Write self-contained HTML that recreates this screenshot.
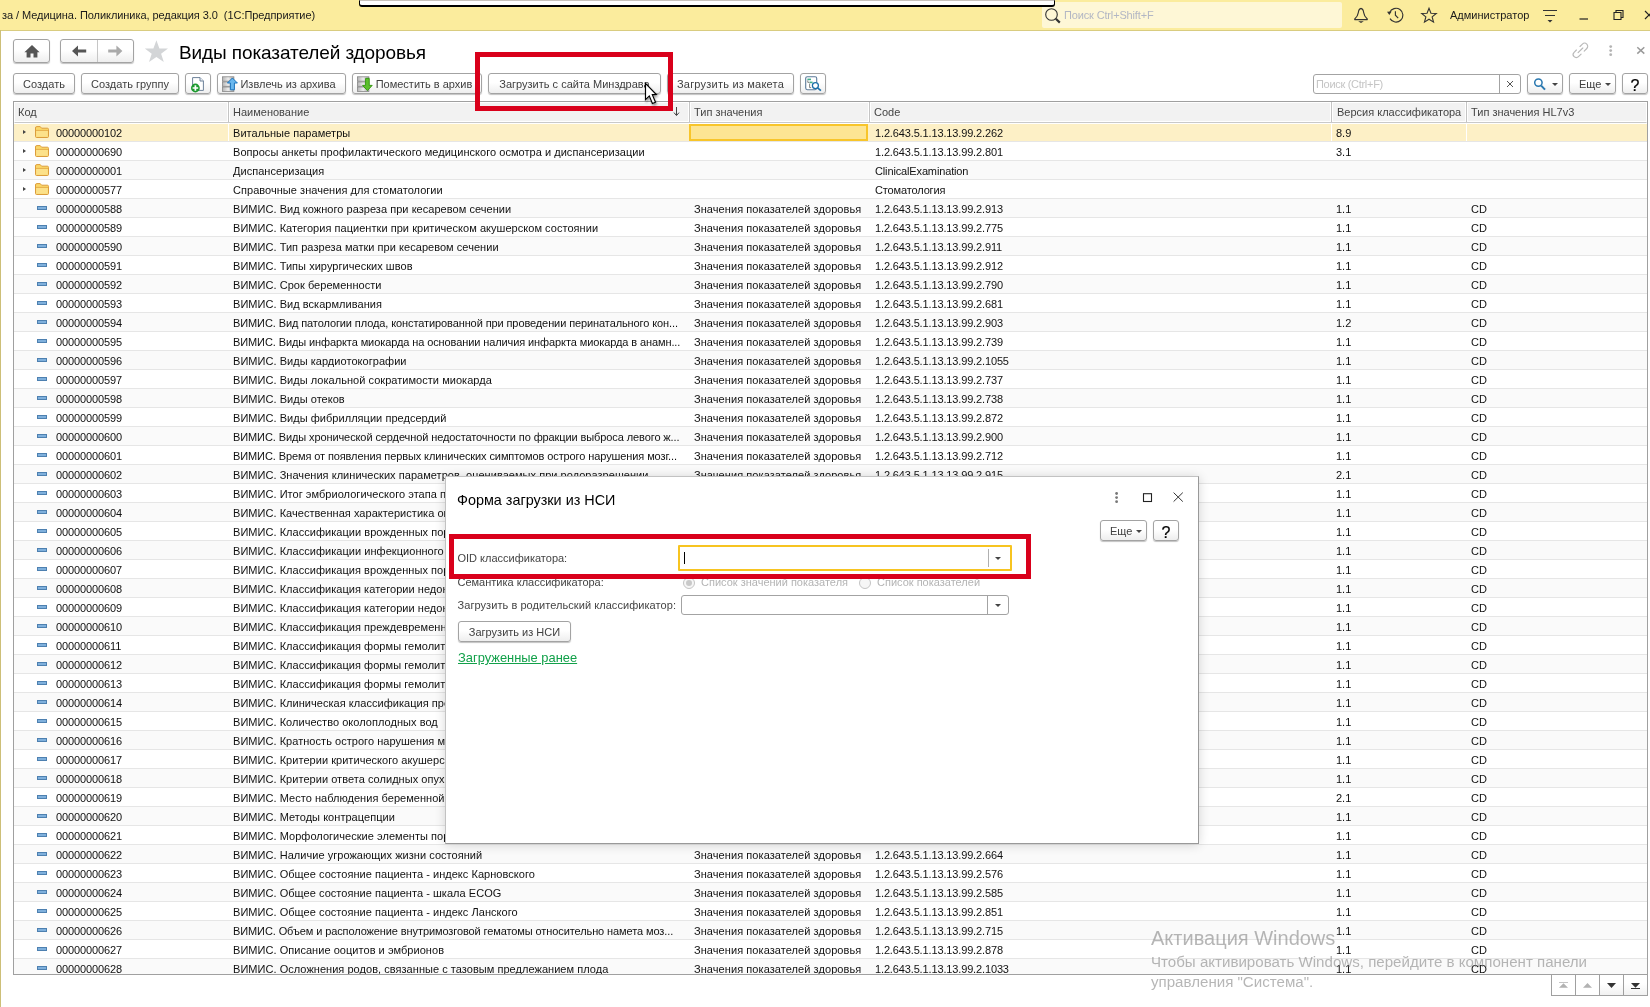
<!DOCTYPE html>
<html lang="ru"><head><meta charset="utf-8"><title>Виды показателей здоровья</title>
<style>
*{box-sizing:border-box;margin:0;padding:0}
html,body{width:1650px;height:1007px;overflow:hidden;background:#fff}
body{will-change:transform;position:relative;font-family:"Liberation Sans",Arial,sans-serif;font-size:11px;color:#333;line-height:1}
i{display:block;position:absolute;font-style:normal}
svg{position:absolute;overflow:visible}
/* title bar */
#tb{position:absolute;left:0;top:0;width:1650px;height:31px;background:#fbec9d;border-bottom:1px solid #d9cc80}
#lstrip{position:absolute;left:0;top:30px;width:1px;height:977px;background:#cdbf78}
#tbtxt{position:absolute;left:2px;top:10px;letter-spacing:-.06px;font-size:11px;color:#1a1a1a;white-space:pre}
#wbar{z-index:3;position:absolute;left:359px;top:0;width:696px;height:7px;background:#fff;border:1px solid #000;border-top:1px solid #c8c2bc;border-bottom-width:2px;border-radius:0 0 3px 3px}
#srch{position:absolute;left:1042px;top:2px;width:300px;height:26px;background:#fef7d6;border-radius:2px}
#srch span{position:absolute;left:22px;top:8px;font-size:11px;color:#b3b7c4;letter-spacing:-.15px}
#adm{position:absolute;left:1450px;top:10px;font-size:11px;color:#1a1a1a}
/* buttons */
.btn{position:absolute;height:21px;border:1px solid #a3a3a3;border-radius:3px;background:linear-gradient(#fff 45%,#eee);box-shadow:0 1px 1px rgba(0,0,0,.24);font-size:11px;color:#404040;text-align:center;line-height:19px;padding-top:1px;white-space:nowrap}
.nav{height:24px}
#title{position:absolute;left:179px;top:43px;font-size:19px;letter-spacing:-.1px;color:#000;white-space:nowrap}
.inp{position:absolute;height:20px;border:1px solid #a3a3a3;border-radius:3px;background:#fff}
/* table */
#tbl{position:absolute;left:13px;top:101px;width:1635px;height:874px;border:1px solid #a0a0a0;overflow:hidden;background:#fff}
#hdr{position:absolute;left:0;top:0;width:1633px;height:21px;background:#f2f2f2;border:1px solid #fff;border-bottom:1px solid #c9c9c9;box-shadow:inset 0 -1px 0 #fff}
#hdr span{position:absolute;top:4px;color:#444;white-space:nowrap}
#hdr i{top:-1px;width:3px;height:20px;background:#c4c4c4;border-left:1px solid #fff;border-right:1px solid #fff}
.r{position:absolute;left:0;width:1633px;height:19px;border-bottom:1px solid #e6e6e6;background:#fff}
.r.alt{background:#fafafa}
.r.sel{background:linear-gradient(#fff 0,#fff 1px,#fdf0c6 1px)}
.r span{position:absolute;top:5px;white-space:nowrap;color:#111}
.r u{position:absolute;top:0;width:1px;height:18px;background:#fff}
.c1{left:42px;letter-spacing:-.12px}.c2{left:219px;letter-spacing:.04px}.c3{left:680px;letter-spacing:.07px}.c4{left:861px;letter-spacing:-.14px}.c5{left:1322px}.c6{left:1457px}
.tri{left:9px;top:7px;width:0;height:0;border-left:3px solid #444;border-top:2.5px solid transparent;border-bottom:2.5px solid transparent}
.fold{left:21px;top:3px;width:14px;height:12px}
.itm{left:23px;top:7px;width:10px;height:4px;background:#7fb0dc;border:1px solid #4d80b0}
.selc{position:absolute;left:-5px;top:-4px;width:179px;height:17px;background:#fde593;border:2px solid #f8c52a;display:block}
/* red boxes */
.red{position:absolute;border:5px solid #d9001b}
/* dialog */
#dlg{position:absolute;left:445px;top:476px;width:754px;height:368px;background:#fff;border:1px solid;border-color:#c2c2c2 #999 #999 #c2c2c2;box-shadow:0 1px 10px rgba(0,0,0,.16)}
#dlg .lb{position:absolute;left:11.5px;color:#444;white-space:nowrap}
#dlg .gr{position:absolute;color:#b4b4b4;white-space:nowrap}
.radio{position:absolute;width:12px;height:12px;border:1px solid #c4c4c4;border-radius:50%;background:#f6f6f6}
#wm{position:absolute;left:1151px;top:0;color:rgba(125,125,125,.56);white-space:nowrap}
</style></head><body>
<div id="tb"></div>
<div id="lstrip"></div>
<div id="tbtxt">за / Медицина. Поликлиника, редакция 3.0  (1С:Предприятие)</div>
<div id="wbar"></div>
<div id="srch"><span>Поиск Ctrl+Shift+F</span>
<svg style="left:2px;top:5px" width="18" height="18" viewBox="0 0 18 18"><circle cx="7.5" cy="7.5" r="5.8" fill="none" stroke="#333" stroke-width="1.1"/><path d="M11.8 11.8 L15.8 15.6" stroke="#333" stroke-width="2.2"/></svg>
</div>
<!-- title icons -->
<svg style="left:1351px;top:4px" width="20" height="22" viewBox="0 0 20 22"><path d="M10 4.6 C8.2 4.6 7.6 6.4 7.3 8.6 C6.9 11.8 5.6 13.4 3.7 15 L3.7 15.6 L16.3 15.6 L16.3 15 C14.4 13.4 13.1 11.8 12.7 8.6 C12.4 6.4 11.8 4.6 10 4.6 Z" fill="none" stroke="#333" stroke-width="1.1" stroke-linejoin="round"/><path d="M9.4 4.6 L10 3.9 L10.6 4.6 Z" fill="#333" stroke="#333" stroke-width=".6"/><path d="M7.2 17.3 L12.8 17.3 L10 19.1 Z" fill="#333"/></svg>
<svg style="left:1385px;top:4px" width="22" height="22" viewBox="0 0 22 22"><path d="M4.6 8.6 A6.9 6.9 0 1 1 5 14.6" fill="none" stroke="#333" stroke-width="1.15"/><path d="M2 7.8 L6.6 7.6 L4.4 11 Z" fill="#333"/><path d="M10.4 7.2 L10.4 11.2 L13.2 14.2" fill="none" stroke="#333" stroke-width="1.15"/></svg>
<svg style="left:1419px;top:4px" width="20" height="20" viewBox="0 0 20 20"><path d="M10.00 4.20 L11.94 9.23 L17.32 9.52 L13.14 12.92 L14.53 18.13 L10.00 15.20 L5.47 18.13 L6.86 12.92 L2.68 9.52 L8.06 9.23 Z" fill="none" stroke="#333" stroke-width="1.1" stroke-linejoin="miter"/></svg>
<div id="adm">Администратор</div>
<svg style="left:1542px;top:8px" width="16" height="16" viewBox="0 0 16 16"><path d="M1 2.5 H15 M3 7.5 H13" stroke="#333" stroke-width="1"/><path d="M5.5 12 L10.5 12 L8 14.6 Z" fill="#333"/></svg>
<svg style="left:1579px;top:17px" width="10" height="4" viewBox="0 0 10 4"><path d="M0.5 2 H9" stroke="#222" stroke-width="1.2"/></svg>
<svg style="left:1613px;top:9px" width="12" height="12" viewBox="0 0 12 12"><path d="M1 3.5 H8 V10.5 H1 Z M3 3.5 V1.5 H10 V8.5 H8" fill="none" stroke="#222" stroke-width="1.1"/></svg>
<svg style="left:1644px;top:10px" width="10" height="10" viewBox="0 0 10 10"><path d="M1 1 L9 9 M9 1 L1 9" stroke="#222" stroke-width="1.2"/></svg>

<!-- nav -->
<div class="btn nav" style="left:13px;top:39px;width:37px">
<svg style="left:9.5px;top:5px" width="16" height="13" viewBox="0 0 16 13"><path d="M8 0 L15.6 7.2 L13.4 7.2 L13.4 12.4 L9.5 12.4 L9.5 8.4 L6.5 8.4 L6.5 12.4 L2.6 12.4 L2.6 7.2 L0.4 7.2 Z" fill="#555"/></svg>
</div>
<div class="btn nav" style="left:60px;top:39px;width:74px">
<i style="left:36px;top:0;width:1px;height:22px;background:#c6c6c6"></i>
<svg style="left:11px;top:5px" width="15" height="12" viewBox="0 0 15 12"><path d="M0 6 L6 0.4 L6 4.5 L14.2 4.5 L14.2 7.5 L6 7.5 L6 11.6 Z" fill="#555"/></svg>
<svg style="left:47px;top:5px" width="15" height="12" viewBox="0 0 15 12"><path d="M14.4 6 L8.4 0.4 L8.4 4.5 L0.2 4.5 L0.2 7.5 L8.4 7.5 L8.4 11.6 Z" fill="#aaa"/></svg>
</div>
<svg style="left:144px;top:40px" width="25" height="23" viewBox="0 0 25 23"><path d="M12.4 0.3 L15.4 8.6 L24 8.6 L17.1 13.7 L19.8 21.9 L12.4 16.9 L5 21.9 L7.7 13.7 L0.8 8.6 L9.4 8.6 Z" fill="#d3d5d7"/></svg>
<div id="title">Виды показателей здоровья</div>
<!-- right icons -->
<svg style="left:1572.4px;top:42px" width="18" height="18" viewBox="0 0 18 18"><g fill="none" stroke="#b9b9b9" stroke-width="1.15" stroke-linecap="round"><path d="M8 4.5 L10.4 2.1 A3.1 3.1 0 0 1 14.8 6.5 L12.2 9.1"/><path d="M4.4 8 L2.1 10.3 A3.1 3.1 0 0 0 6.5 14.7 L9.1 12.1"/><path d="M6.1 10.7 L10.8 6"/></g></svg>
<svg style="left:1608px;top:44px" width="6" height="14" viewBox="0 0 6 14"><g fill="#b4b4b4"><circle cx="2.7" cy="2.6" r="1.4"/><circle cx="2.7" cy="6.6" r="1.4"/><circle cx="2.7" cy="10.7" r="1.4"/></g></svg>
<svg style="left:1636px;top:46px" width="10" height="10" viewBox="0 0 10 10"><path d="M1.3 1.2 L8.3 7.6 M8.3 1.2 L1.3 7.6" stroke="#9a9a9a" stroke-width="1.5"/></svg>

<!-- toolbar -->
<div class="btn" style="left:13px;top:73px;width:62px">Создать</div>
<div class="btn" style="left:81px;top:73px;width:98px">Создать группу</div>
<div class="btn" style="left:185px;top:73px;width:26px">
<svg style="left:5px;top:3px" width="16" height="16" viewBox="0 0 16 16"><path d="M1.6 0.6 H9 L12.4 4 V13.4 H1.6 Z" fill="#fff" stroke="#6d8199" stroke-width="1"/><path d="M9 0.6 V4 H12.4" fill="#eef2f7" stroke="#6d8199" stroke-width="1"/><circle cx="4.4" cy="11" r="4.4" fill="#1d9a2f"/><path d="M4.4 8.2 V13.8 M1.6 11 H7.2" stroke="#fff" stroke-width="1.7"/></svg>
</div>
<div class="btn" style="left:217px;top:73px;width:129px;padding-left:13px">Извлечь из архива
<svg style="left:4px;top:2px" width="17" height="17" viewBox="0 0 17 17"><defs><linearGradient id="gs" x1="0" x2="1"><stop offset="0" stop-color="#b4b4b4"/><stop offset=".5" stop-color="#ececec"/><stop offset="1" stop-color="#a6a6a6"/></linearGradient></defs><rect x="0.5" y="0.8" width="11.4" height="4.4" fill="url(#gs)" stroke="#878787" stroke-width=".8"/><rect x="0.5" y="5.9" width="11.4" height="4.4" fill="url(#gs)" stroke="#878787" stroke-width=".8"/><rect x="0.5" y="11" width="11.4" height="4.4" fill="url(#gs)" stroke="#878787" stroke-width=".8"/><path d="M10.4 2 L15.4 7 L12.4 7 L12.4 13.8 L8.4 13.8 L8.4 7 L5.4 7 Z" fill="#69b7ee" stroke="#1b74bd" stroke-width="1"/></svg>
</div>
<div class="btn" style="left:352px;top:73px;width:130px;padding-left:14px">Поместить в архив
<svg style="left:4px;top:2px" width="17" height="17" viewBox="0 0 17 17"><rect x="0.5" y="0.8" width="11.4" height="4.4" fill="url(#gs)" stroke="#878787" stroke-width=".8"/><rect x="0.5" y="5.9" width="11.4" height="4.4" fill="url(#gs)" stroke="#878787" stroke-width=".8"/><rect x="0.5" y="11" width="11.4" height="4.4" fill="url(#gs)" stroke="#878787" stroke-width=".8"/><path d="M8.6 2.4 L12.2 2.4 L12.2 9.4 L15.2 9.4 L10.4 14.6 L5.6 9.4 L8.6 9.4 Z" fill="#5cc02c" stroke="#3a9a16" stroke-width="1"/></svg>
</div>
<div class="btn" style="left:488px;top:73px;width:173px">Загрузить с сайта Минздрава</div>
<div class="btn" style="left:667px;top:73px;width:127px;letter-spacing:.22px">Загрузить из макета</div>
<div class="btn" style="left:800px;top:73px;width:26px">
<svg style="left:4px;top:2px" width="18" height="17" viewBox="0 0 18 17"><rect x="0.7" y="0.7" width="11" height="13" rx="1.6" fill="#fff" stroke="#5b7a99" stroke-width="1.1"/><rect x="2.4" y="2.6" width="3.6" height="1.6" fill="#3fae8c"/><rect x="4.6" y="5.6" width="3" height="1.6" fill="#3fae8c"/><path d="M2.8 4.4 V6.4 H4.4 M4.6 7.6 V11.6 H6.2" fill="none" stroke="#777" stroke-width=".9"/><circle cx="10.4" cy="9.6" r="3" fill="#fff" stroke="#1a6fa8" stroke-width="1.3"/><path d="M12.6 11.8 L15.9 14.7" stroke="#1a6fa8" stroke-width="1.6"/></svg>
</div>
<div class="inp" style="left:1313px;top:74px;width:208px"><span style="position:absolute;left:2px;top:4px;color:#c4c4c4;letter-spacing:-.3px">Поиск (Ctrl+F)</span><i style="left:185px;top:0;width:1px;height:18px;background:#a3a3a3"></i>
<svg style="left:192px;top:5px" width="8" height="8" viewBox="0 0 8 8"><path d="M1 1 L7 7 M7 1 L1 7" stroke="#555" stroke-width="1"/></svg></div>
<div class="btn" style="left:1527px;top:73px;width:36px">
<svg style="left:5px;top:3px" width="16" height="15" viewBox="0 0 16 15"><circle cx="5.4" cy="5.6" r="3.7" fill="none" stroke="#2a78b0" stroke-width="1.5"/><path d="M8.2 8.6 L12 12.6" stroke="#2a78b0" stroke-width="2"/></svg>
<i style="left:24px;top:9px;border-top:3px solid #444;border-left:3px solid transparent;border-right:3px solid transparent"></i>
</div>
<div class="btn" style="left:1569px;top:73px;width:47px;text-align:left;padding-left:9px">Еще<i style="left:35px;top:9px;border-top:3px solid #444;border-left:3px solid transparent;border-right:3px solid transparent"></i></div>
<div class="btn" style="left:1622px;top:73px;width:26px;font-size:16px;color:#000;line-height:21px;-webkit-text-stroke:.2px #000">?</div>

<div id="tbl">
<div id="hdr">
<span style="left:3px">Код</span><i style="left:212px"></i>
<span style="left:218px">Наименование</span><i style="left:673px"></i>
<span style="left:679px">Тип значения</span><i style="left:853px"></i>
<span style="left:859px">Code</span><i style="left:1315px"></i>
<span style="left:1322px">Версия классификатора</span><i style="left:1450px"></i>
<span style="left:1456px">Тип значения HL7v3</span>
<svg style="left:658px;top:4px" width="7" height="10" viewBox="0 0 7 10"><path d="M3.5 0 V8 M1 5.6 L3.5 8.6 L6 5.6" fill="none" stroke="#444" stroke-width="1"/></svg>
</div>
<div class="r sel" style="top:21px"><i class="tri"></i><svg class="fold" width="14" height="12" viewBox="0 0 14 12"><path d="M0.5 2 Q0.5 0.6 1.8 0.6 L5.2 0.6 L6.6 2.2 L12.4 2.2 Q13.5 2.2 13.5 3.4 L13.5 10.4 Q13.5 11.5 12.4 11.5 L1.6 11.5 Q0.5 11.5 0.5 10.4 Z" fill="#fbd768" stroke="#dc9d3c" stroke-width="1"/><path d="M1 4.4 H13" stroke="#e3aa48" stroke-width=".9"/><path d="M1.2 5 H12.8 V10.8 H1.2 Z" fill="#fce18a"/></svg><u style="left:214px"></u><u style="left:1317px"></u><u style="left:1452px"></u><span class="c1">00000000102</span><span class="c2">Витальные параметры</span><span class="c3"><b class="selc"></b></span><span class="c4">1.2.643.5.1.13.13.99.2.262</span><span class="c5">8.9</span><span class="c6"></span></div>
<div class="r" style="top:40px"><i class="tri"></i><svg class="fold" width="14" height="12" viewBox="0 0 14 12"><path d="M0.5 2 Q0.5 0.6 1.8 0.6 L5.2 0.6 L6.6 2.2 L12.4 2.2 Q13.5 2.2 13.5 3.4 L13.5 10.4 Q13.5 11.5 12.4 11.5 L1.6 11.5 Q0.5 11.5 0.5 10.4 Z" fill="#fbd768" stroke="#dc9d3c" stroke-width="1"/><path d="M1 4.4 H13" stroke="#e3aa48" stroke-width=".9"/><path d="M1.2 5 H12.8 V10.8 H1.2 Z" fill="#fce18a"/></svg><span class="c1">00000000690</span><span class="c2">Вопросы анкеты профилактического медицинского осмотра и диспансеризации</span><span class="c3"></span><span class="c4">1.2.643.5.1.13.13.99.2.801</span><span class="c5">3.1</span><span class="c6"></span></div>
<div class="r alt" style="top:59px"><i class="tri"></i><svg class="fold" width="14" height="12" viewBox="0 0 14 12"><path d="M0.5 2 Q0.5 0.6 1.8 0.6 L5.2 0.6 L6.6 2.2 L12.4 2.2 Q13.5 2.2 13.5 3.4 L13.5 10.4 Q13.5 11.5 12.4 11.5 L1.6 11.5 Q0.5 11.5 0.5 10.4 Z" fill="#fbd768" stroke="#dc9d3c" stroke-width="1"/><path d="M1 4.4 H13" stroke="#e3aa48" stroke-width=".9"/><path d="M1.2 5 H12.8 V10.8 H1.2 Z" fill="#fce18a"/></svg><span class="c1">00000000001</span><span class="c2">Диспансеризация</span><span class="c3"></span><span class="c4">ClinicalExamination</span><span class="c5"></span><span class="c6"></span></div>
<div class="r" style="top:78px"><i class="tri"></i><svg class="fold" width="14" height="12" viewBox="0 0 14 12"><path d="M0.5 2 Q0.5 0.6 1.8 0.6 L5.2 0.6 L6.6 2.2 L12.4 2.2 Q13.5 2.2 13.5 3.4 L13.5 10.4 Q13.5 11.5 12.4 11.5 L1.6 11.5 Q0.5 11.5 0.5 10.4 Z" fill="#fbd768" stroke="#dc9d3c" stroke-width="1"/><path d="M1 4.4 H13" stroke="#e3aa48" stroke-width=".9"/><path d="M1.2 5 H12.8 V10.8 H1.2 Z" fill="#fce18a"/></svg><span class="c1">00000000577</span><span class="c2">Справочные значения для стоматологии</span><span class="c3"></span><span class="c4">Стоматология</span><span class="c5"></span><span class="c6"></span></div>
<div class="r alt" style="top:97px"><i class="itm"></i><span class="c1">00000000588</span><span class="c2">ВИМИС. Вид кожного разреза при кесаревом сечении</span><span class="c3">Значения показателей здоровья</span><span class="c4">1.2.643.5.1.13.13.99.2.913</span><span class="c5">1.1</span><span class="c6">CD</span></div>
<div class="r" style="top:116px"><i class="itm"></i><span class="c1">00000000589</span><span class="c2">ВИМИС. Категория пациентки при критическом акушерском состоянии</span><span class="c3">Значения показателей здоровья</span><span class="c4">1.2.643.5.1.13.13.99.2.775</span><span class="c5">1.1</span><span class="c6">CD</span></div>
<div class="r alt" style="top:135px"><i class="itm"></i><span class="c1">00000000590</span><span class="c2">ВИМИС. Тип разреза матки при кесаревом сечении</span><span class="c3">Значения показателей здоровья</span><span class="c4">1.2.643.5.1.13.13.99.2.911</span><span class="c5">1.1</span><span class="c6">CD</span></div>
<div class="r" style="top:154px"><i class="itm"></i><span class="c1">00000000591</span><span class="c2">ВИМИС. Типы хирургических швов</span><span class="c3">Значения показателей здоровья</span><span class="c4">1.2.643.5.1.13.13.99.2.912</span><span class="c5">1.1</span><span class="c6">CD</span></div>
<div class="r alt" style="top:173px"><i class="itm"></i><span class="c1">00000000592</span><span class="c2">ВИМИС. Срок беременности</span><span class="c3">Значения показателей здоровья</span><span class="c4">1.2.643.5.1.13.13.99.2.790</span><span class="c5">1.1</span><span class="c6">CD</span></div>
<div class="r" style="top:192px"><i class="itm"></i><span class="c1">00000000593</span><span class="c2">ВИМИС. Вид вскармливания</span><span class="c3">Значения показателей здоровья</span><span class="c4">1.2.643.5.1.13.13.99.2.681</span><span class="c5">1.1</span><span class="c6">CD</span></div>
<div class="r alt" style="top:211px"><i class="itm"></i><span class="c1">00000000594</span><span class="c2" style="letter-spacing:-.1px">ВИМИС. Вид патологии плода, констатированной при проведении перинатального кон...</span><span class="c3">Значения показателей здоровья</span><span class="c4">1.2.643.5.1.13.13.99.2.903</span><span class="c5">1.2</span><span class="c6">CD</span></div>
<div class="r" style="top:230px"><i class="itm"></i><span class="c1">00000000595</span><span class="c2" style="letter-spacing:-.1px">ВИМИС. Виды инфаркта миокарда на основании наличия инфаркта миокарда в анамн...</span><span class="c3">Значения показателей здоровья</span><span class="c4">1.2.643.5.1.13.13.99.2.739</span><span class="c5">1.1</span><span class="c6">CD</span></div>
<div class="r alt" style="top:249px"><i class="itm"></i><span class="c1">00000000596</span><span class="c2">ВИМИС. Виды кардиотокографии</span><span class="c3">Значения показателей здоровья</span><span class="c4">1.2.643.5.1.13.13.99.2.1055</span><span class="c5">1.1</span><span class="c6">CD</span></div>
<div class="r" style="top:268px"><i class="itm"></i><span class="c1">00000000597</span><span class="c2">ВИМИС. Виды локальной сократимости миокарда</span><span class="c3">Значения показателей здоровья</span><span class="c4">1.2.643.5.1.13.13.99.2.737</span><span class="c5">1.1</span><span class="c6">CD</span></div>
<div class="r alt" style="top:287px"><i class="itm"></i><span class="c1">00000000598</span><span class="c2">ВИМИС. Виды отеков</span><span class="c3">Значения показателей здоровья</span><span class="c4">1.2.643.5.1.13.13.99.2.738</span><span class="c5">1.1</span><span class="c6">CD</span></div>
<div class="r" style="top:306px"><i class="itm"></i><span class="c1">00000000599</span><span class="c2">ВИМИС. Виды фибрилляции предсердий</span><span class="c3">Значения показателей здоровья</span><span class="c4">1.2.643.5.1.13.13.99.2.872</span><span class="c5">1.1</span><span class="c6">CD</span></div>
<div class="r alt" style="top:325px"><i class="itm"></i><span class="c1">00000000600</span><span class="c2" style="letter-spacing:-.1px">ВИМИС. Виды хронической сердечной недостаточности по фракции выброса левого ж...</span><span class="c3">Значения показателей здоровья</span><span class="c4">1.2.643.5.1.13.13.99.2.900</span><span class="c5">1.1</span><span class="c6">CD</span></div>
<div class="r" style="top:344px"><i class="itm"></i><span class="c1">00000000601</span><span class="c2" style="letter-spacing:-.1px">ВИМИС. Время от появления первых клинических симптомов острого нарушения мозг...</span><span class="c3">Значения показателей здоровья</span><span class="c4">1.2.643.5.1.13.13.99.2.712</span><span class="c5">1.1</span><span class="c6">CD</span></div>
<div class="r alt" style="top:363px"><i class="itm"></i><span class="c1">00000000602</span><span class="c2">ВИМИС. Значения клинических параметров, оцениваемых при родоразрешении</span><span class="c3">Значения показателей здоровья</span><span class="c4">1.2.643.5.1.13.13.99.2.915</span><span class="c5">2.1</span><span class="c6">CD</span></div>
<div class="r" style="top:382px"><i class="itm"></i><span class="c1">00000000603</span><span class="c2">ВИМИС. Итог эмбриологического этапа программы ВРТ</span><span class="c3">Значения показателей здоровья</span><span class="c4">1.2.643.5.1.13.13.99.2.916</span><span class="c5">1.1</span><span class="c6">CD</span></div>
<div class="r alt" style="top:401px"><i class="itm"></i><span class="c1">00000000604</span><span class="c2">ВИМИС. Качественная характеристика околоплодных вод</span><span class="c3">Значения показателей здоровья</span><span class="c4">1.2.643.5.1.13.13.99.2.917</span><span class="c5">1.1</span><span class="c6">CD</span></div>
<div class="r" style="top:420px"><i class="itm"></i><span class="c1">00000000605</span><span class="c2">ВИМИС. Классификации врожденных пороков развития</span><span class="c3">Значения показателей здоровья</span><span class="c4">1.2.643.5.1.13.13.99.2.918</span><span class="c5">1.1</span><span class="c6">CD</span></div>
<div class="r alt" style="top:439px"><i class="itm"></i><span class="c1">00000000606</span><span class="c2">ВИМИС. Классификации инфекционного процесса</span><span class="c3">Значения показателей здоровья</span><span class="c4">1.2.643.5.1.13.13.99.2.919</span><span class="c5">1.1</span><span class="c6">CD</span></div>
<div class="r" style="top:458px"><i class="itm"></i><span class="c1">00000000607</span><span class="c2">ВИМИС. Классификация врожденных пороков сердца</span><span class="c3">Значения показателей здоровья</span><span class="c4">1.2.643.5.1.13.13.99.2.920</span><span class="c5">1.1</span><span class="c6">CD</span></div>
<div class="r alt" style="top:477px"><i class="itm"></i><span class="c1">00000000608</span><span class="c2">ВИМИС. Классификация категории недоношенности</span><span class="c3">Значения показателей здоровья</span><span class="c4">1.2.643.5.1.13.13.99.2.921</span><span class="c5">1.1</span><span class="c6">CD</span></div>
<div class="r" style="top:496px"><i class="itm"></i><span class="c1">00000000609</span><span class="c2">ВИМИС. Классификация категории недоношенности по массе</span><span class="c3">Значения показателей здоровья</span><span class="c4">1.2.643.5.1.13.13.99.2.922</span><span class="c5">1.1</span><span class="c6">CD</span></div>
<div class="r alt" style="top:515px"><i class="itm"></i><span class="c1">00000000610</span><span class="c2">ВИМИС. Классификация преждевременных родов</span><span class="c3">Значения показателей здоровья</span><span class="c4">1.2.643.5.1.13.13.99.2.923</span><span class="c5">1.1</span><span class="c6">CD</span></div>
<div class="r" style="top:534px"><i class="itm"></i><span class="c1">00000000611</span><span class="c2">ВИМИС. Классификация формы гемолитической болезни</span><span class="c3">Значения показателей здоровья</span><span class="c4">1.2.643.5.1.13.13.99.2.924</span><span class="c5">1.1</span><span class="c6">CD</span></div>
<div class="r alt" style="top:553px"><i class="itm"></i><span class="c1">00000000612</span><span class="c2">ВИМИС. Классификация формы гемолитической болезни плода</span><span class="c3">Значения показателей здоровья</span><span class="c4">1.2.643.5.1.13.13.99.2.925</span><span class="c5">1.1</span><span class="c6">CD</span></div>
<div class="r" style="top:572px"><i class="itm"></i><span class="c1">00000000613</span><span class="c2">ВИМИС. Классификация формы гемолитической болезни новорожденных</span><span class="c3">Значения показателей здоровья</span><span class="c4">1.2.643.5.1.13.13.99.2.926</span><span class="c5">1.1</span><span class="c6">CD</span></div>
<div class="r alt" style="top:591px"><i class="itm"></i><span class="c1">00000000614</span><span class="c2">ВИМИС. Клиническая классификация преэклампсии</span><span class="c3">Значения показателей здоровья</span><span class="c4">1.2.643.5.1.13.13.99.2.927</span><span class="c5">1.1</span><span class="c6">CD</span></div>
<div class="r" style="top:610px"><i class="itm"></i><span class="c1">00000000615</span><span class="c2">ВИМИС. Количество околоплодных вод</span><span class="c3">Значения показателей здоровья</span><span class="c4">1.2.643.5.1.13.13.99.2.928</span><span class="c5">1.1</span><span class="c6">CD</span></div>
<div class="r alt" style="top:629px"><i class="itm"></i><span class="c1">00000000616</span><span class="c2">ВИМИС. Кратность острого нарушения мозгового кровообращения</span><span class="c3">Значения показателей здоровья</span><span class="c4">1.2.643.5.1.13.13.99.2.929</span><span class="c5">1.1</span><span class="c6">CD</span></div>
<div class="r" style="top:648px"><i class="itm"></i><span class="c1">00000000617</span><span class="c2">ВИМИС. Критерии критического акушерского состояния</span><span class="c3">Значения показателей здоровья</span><span class="c4">1.2.643.5.1.13.13.99.2.930</span><span class="c5">1.1</span><span class="c6">CD</span></div>
<div class="r alt" style="top:667px"><i class="itm"></i><span class="c1">00000000618</span><span class="c2">ВИМИС. Критерии ответа солидных опухолей</span><span class="c3">Значения показателей здоровья</span><span class="c4">1.2.643.5.1.13.13.99.2.931</span><span class="c5">1.1</span><span class="c6">CD</span></div>
<div class="r" style="top:686px"><i class="itm"></i><span class="c1">00000000619</span><span class="c2">ВИМИС. Место наблюдения беременной</span><span class="c3">Значения показателей здоровья</span><span class="c4">1.2.643.5.1.13.13.99.2.932</span><span class="c5">2.1</span><span class="c6">CD</span></div>
<div class="r alt" style="top:705px"><i class="itm"></i><span class="c1">00000000620</span><span class="c2">ВИМИС. Методы контрацепции</span><span class="c3">Значения показателей здоровья</span><span class="c4">1.2.643.5.1.13.13.99.2.933</span><span class="c5">1.1</span><span class="c6">CD</span></div>
<div class="r" style="top:724px"><i class="itm"></i><span class="c1">00000000621</span><span class="c2">ВИМИС. Морфологические элементы поражения</span><span class="c3">Значения показателей здоровья</span><span class="c4">1.2.643.5.1.13.13.99.2.934</span><span class="c5">1.1</span><span class="c6">CD</span></div>
<div class="r alt" style="top:743px"><i class="itm"></i><span class="c1">00000000622</span><span class="c2">ВИМИС. Наличие угрожающих жизни состояний</span><span class="c3">Значения показателей здоровья</span><span class="c4">1.2.643.5.1.13.13.99.2.664</span><span class="c5">1.1</span><span class="c6">CD</span></div>
<div class="r" style="top:762px"><i class="itm"></i><span class="c1">00000000623</span><span class="c2">ВИМИС. Общее состояние пациента - индекс Карновского</span><span class="c3">Значения показателей здоровья</span><span class="c4">1.2.643.5.1.13.13.99.2.576</span><span class="c5">1.1</span><span class="c6">CD</span></div>
<div class="r alt" style="top:781px"><i class="itm"></i><span class="c1">00000000624</span><span class="c2">ВИМИС. Общее состояние пациента - шкала ECOG</span><span class="c3">Значения показателей здоровья</span><span class="c4">1.2.643.5.1.13.13.99.2.585</span><span class="c5">1.1</span><span class="c6">CD</span></div>
<div class="r" style="top:800px"><i class="itm"></i><span class="c1">00000000625</span><span class="c2">ВИМИС. Общее состояние пациента - индекс Ланского</span><span class="c3">Значения показателей здоровья</span><span class="c4">1.2.643.5.1.13.13.99.2.851</span><span class="c5">1.1</span><span class="c6">CD</span></div>
<div class="r alt" style="top:819px"><i class="itm"></i><span class="c1">00000000626</span><span class="c2" style="letter-spacing:-.1px">ВИМИС. Объем и расположение внутримозговой гематомы относительно намета моз...</span><span class="c3">Значения показателей здоровья</span><span class="c4">1.2.643.5.1.13.13.99.2.715</span><span class="c5">1.1</span><span class="c6">CD</span></div>
<div class="r" style="top:838px"><i class="itm"></i><span class="c1">00000000627</span><span class="c2">ВИМИС. Описание ооцитов и эмбрионов</span><span class="c3">Значения показателей здоровья</span><span class="c4">1.2.643.5.1.13.13.99.2.878</span><span class="c5">1.1</span><span class="c6">CD</span></div>
<div class="r alt" style="top:857px"><i class="itm"></i><span class="c1">00000000628</span><span class="c2">ВИМИС. Осложнения родов, связанные с тазовым предлежанием плода</span><span class="c3">Значения показателей здоровья</span><span class="c4">1.2.643.5.1.13.13.99.2.1033</span><span class="c5">1.1</span><span class="c6">CD</span></div>
</div>

<!-- scroll nav buttons -->
<div style="position:absolute;left:1551px;top:974px;width:97px;height:22px;border:1px solid #a0a0a0;background:linear-gradient(90deg,#fff 47px,transparent 47px),linear-gradient(#fff 40%,#f1f1f1)">
<i style="left:23px;top:0;width:1px;height:20px;background:#a0a0a0"></i><i style="left:47px;top:0;width:1px;height:20px;background:#a0a0a0"></i><i style="left:71px;top:0;width:1px;height:20px;background:#a0a0a0"></i>
<svg style="left:0;top:0" width="95" height="20" viewBox="0 0 95 20"><g fill="#b2b2b2"><path d="M7 7.2 H16 V8 H7 Z M11.5 8.2 L16 12.7 H7 Z"/><path d="M35.5 8 L40 12.7 H31 Z"/></g><g fill="#333"><path d="M59.5 13 L64 8 H55 Z"/><path d="M83.5 12.7 L88 8 H79 Z M79 13 H88 V13.9 H79 Z"/></g></svg>
</div>

<div class="red" style="left:475px;top:52px;width:198px;height:59px"></div>

<!-- dialog -->
<div id="dlg">
<div style="position:absolute;left:11px;top:16px;font-size:14.4px;color:#000;white-space:nowrap">Форма загрузки из НСИ</div>
<svg style="left:668px;top:14px" width="6" height="14" viewBox="0 0 6 14"><g fill="#777"><circle cx="2.6" cy="2.5" r="1.4"/><circle cx="2.6" cy="6.6" r="1.4"/><circle cx="2.6" cy="10.7" r="1.4"/></g></svg>
<svg style="left:697px;top:16px" width="10" height="10" viewBox="0 0 10 10"><rect x="0.5" y="0.7" width="8" height="7.8" fill="none" stroke="#222" stroke-width="1.1"/></svg>
<svg style="left:727px;top:15px" width="12" height="12" viewBox="0 0 12 12"><path d="M0.6 0.6 L9.8 9.6 M9.8 0.6 L0.6 9.6" stroke="#333" stroke-width="1"/></svg>
<div class="btn" style="left:654px;top:43px;width:47px;text-align:left;padding-left:9px">Еще<i style="left:35px;top:9px;border-top:3px solid #444;border-left:3px solid transparent;border-right:3px solid transparent"></i></div>
<div class="btn" style="left:707px;top:43px;width:26px;font-size:16px;color:#000;line-height:21px;-webkit-text-stroke:.2px #000">?</div>

<div class="lb" style="top:76px">OID классификатора:</div>
<div style="position:absolute;left:232px;top:68px;width:334px;height:26px;border:2px solid #f7c420;border-radius:1px;background:#fff">
<i style="left:4px;top:5px;width:1px;height:12px;background:#000"></i>
<i style="left:308px;top:2px;width:1px;height:18px;background:#b0b0b0"></i>
<i style="left:315px;top:10px;border-top:3px solid #444;border-left:3px solid transparent;border-right:3px solid transparent"></i>
</div>
<div class="lb" style="top:100px">Семантика классификатора:</div>
<div class="radio" style="left:237px;top:100px"><i style="left:2px;top:2px;width:6px;height:6px;border-radius:50%;background:#c9c9c9"></i></div>
<div class="gr" style="left:255px;top:100px">Список значений показателя</div>
<div class="radio" style="left:413px;top:100px"></div>
<div class="gr" style="left:431px;top:100px">Список показателей</div>
<div class="lb" style="top:123px;letter-spacing:.06px">Загрузить в родительский классификатор:</div>
<div class="inp" style="left:235px;top:118px;width:328px">
<i style="left:305px;top:0;width:1px;height:18px;background:#a3a3a3"></i>
<i style="left:313px;top:8px;border-top:3px solid #444;border-left:3px solid transparent;border-right:3px solid transparent"></i>
</div>
<div class="btn" style="left:12px;top:144px;width:113px">Загрузить из НСИ</div>
<div style="position:absolute;left:12px;top:175px;font-size:12.9px;color:#12a14a;text-decoration:underline;white-space:nowrap">Загруженные ранее</div>
</div>
<div class="red" style="left:449px;top:534px;width:582px;height:45px"></div>

<!-- cursor -->
<svg style="left:644px;top:82px;filter:drop-shadow(1.5px 2px 1.2px rgba(0,0,0,.38))" width="16" height="24" viewBox="0 0 16 24"><path d="M1.5 1.3 L1.5 17.7 L5.3 13.9 L8.4 21.5 L11.5 20.3 L8.3 12.6 L12.3 12.5 Z" fill="#fff" stroke="#000" stroke-width="1.15" stroke-linejoin="miter"/></svg>

<div id="wm"><div style="position:absolute;left:0;top:928px;font-size:20px">Активация Windows</div>
<div style="position:absolute;left:0;top:954px;font-size:15.1px">Чтобы активировать Windows, перейдите в компонент панели</div>
<div style="position:absolute;left:0;top:974px;font-size:15.1px">управления "Система".</div></div>
</body></html>
